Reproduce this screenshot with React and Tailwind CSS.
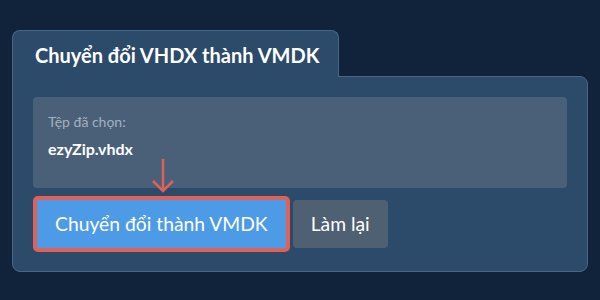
import React from 'react'

export default function App() {
  return (
    <div className="w-[600px] h-[300px] bg-[#10233a] pt-[30px] px-[12px] font-['Lato','Liberation_Sans',sans-serif]">
      <div className="flex">
        <div className="relative z-10 -mb-px h-[47px] w-[327px] rounded-t-[8px] border border-b-0 border-[#4b6685] bg-[#2c4a69] pl-[22px] pt-[9px] text-[20px] font-bold text-white">
          Chuyển đổi VHDX thành VMDK
        </div>
      </div>
      <div className="relative h-[196px] rounded-b-[8px] rounded-tr-[8px] border border-[#4b6685] bg-[#2c4a69] px-[20px] pt-[20px]">
        <div className="h-[91px] rounded-[4px] bg-[#4a6079] px-[15px] pt-[17px]">
          <div className="text-[14px] leading-[16px] text-[#a5b0bd]">Tệp đã chọn:</div>
          <div className="mt-[9px] text-[16px] font-bold leading-[20px] text-white">ezyZip.vhdx</div>
        </div>
        <div className="mt-[8px] flex items-center">
          <div className="rounded-[5px] border-4 border-[#e0605a]">
            <button className="h-[48px] bg-[#4d9be6] px-[18px] text-[19.3px] text-white">
              Chuyển đổi thành VMDK
            </button>
          </div>
          <button className="ml-[3px] h-[48px] rounded-[4px] bg-[#4f6072] px-[18px] text-[19.3px] text-white">
            Làm lại
          </button>
        </div>
        <svg className="absolute left-[138px] top-[81px]" width="24" height="36" viewBox="0 0 24 36" fill="none">
          <path d="M12 1 V33 M2 23 L12 33 L22 23" stroke="#e0605a" strokeWidth="2.5" />
        </svg>
      </div>
    </div>
  )
}
